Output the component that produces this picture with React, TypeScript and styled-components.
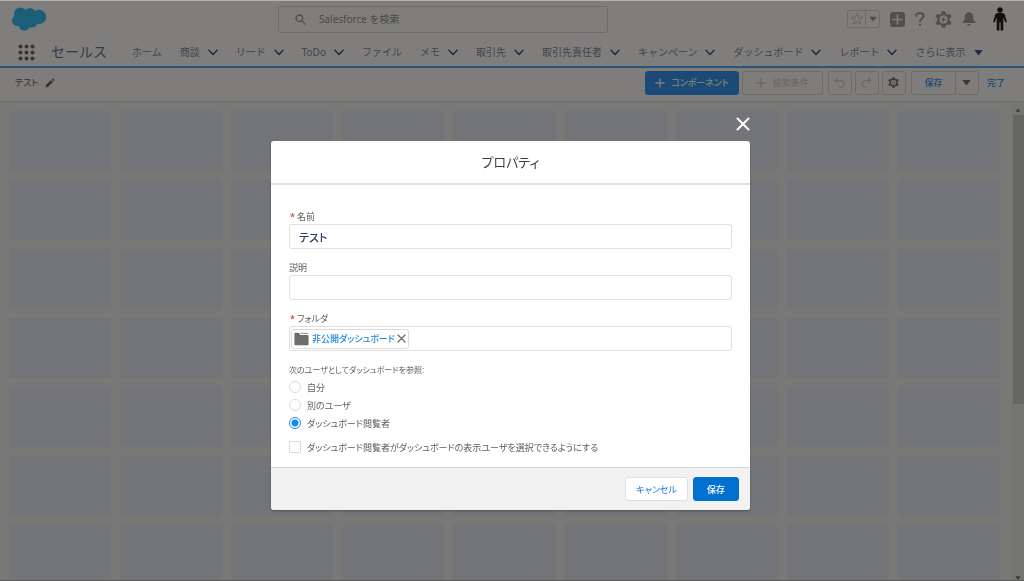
import React from 'react';
import styled, { createGlobalStyle, css } from 'styled-components';

const GlobalStyle = createGlobalStyle`
  *, *::before, *::after { box-sizing: border-box; }
  body {
    margin: 0;
    background: #f0f0ee;
    font-family: "Noto Sans", "Noto Sans CJK JP", sans-serif;
    font-size: 10px;
    line-height: 14px;
    color: #5f5d5a;
  }
  button, input { font: inherit; color: inherit; margin: 0; }
  button { cursor: pointer; }
  a { text-decoration: none; color: inherit; }
`;

/* ---------- page shell ---------- */

const Shell = styled.div`
  display: flex;
  flex-direction: column;
  height: 100vh;
  overflow: hidden;
`;

const Header = styled.header`
  flex: none;
  background: #fffcf8;
  border-bottom: 2px solid #4ea8f8;
`;

const TopRow = styled.div`
  display: grid;
  grid-template-columns: 2fr 330px 3fr;
  align-items: center;
  height: 38px;
  padding: 0 17px 0 12px;
`;

const SearchBox = styled.label`
  display: flex;
  align-items: center;
  gap: 13px;
  height: 27px;
  padding: 0 16px;
  border: 1px solid #dedbd6;
  border-radius: 3px;
  color: #a19e9a;
`;

const SearchInput = styled.input`
  flex: 1;
  min-width: 0;
  border: 0;
  padding: 0;
  outline: 0;
  background: transparent;
  &::placeholder { color: #97938e; opacity: 1; }
`;

const Utilities = styled.div`
  display: flex;
  justify-content: flex-end;
  align-items: center;
  gap: 10px;
  color: #a39c96;
`;

const Favorites = styled.div`
  display: flex;
  height: 18px;
  border: 1px solid #dad6d0;
  border-radius: 3px;
`;

const IconButton = styled.button`
  display: grid;
  place-items: center;
  padding: 0;
  border: 0;
  background: none;
`;

const FavoriteButton = styled(IconButton)`
  width: 17px;
  color: #d6d2cd;
  & + & {
    width: 14px;
    border-left: 1px solid #dad6d0;
    color: #9b9691;
  }
`;

const Avatar = styled(IconButton)`
  margin-left: 7px;
  color: #22201e;
`;

const Nav = styled.nav`
  display: flex;
  align-items: center;
  height: 28px;
  padding-left: 18px;
  color: #8288a4;
  white-space: nowrap;
`;

const AppName = styled.span`
  width: 81px;
  margin-left: 16px;
  font-size: 14px;
  line-height: 20px;
  color: #6b7498;
`;

const NavList = styled.ul`
  display: flex;
  gap: 18px;
  margin: 0;
  padding: 0;
  list-style: none;
`;

const NavItem = styled.li`
  display: flex;
  align-items: center;
  gap: 8px;
`;

const NavToggle = styled(IconButton)`
  width: 10px;
  color: #45558a;
`;

/* ---------- dashboard toolbar ---------- */

const Toolbar = styled.div`
  flex: none;
  display: flex;
  align-items: center;
  justify-content: space-between;
  height: 34px;
  padding: 0 19px 4px 15px;
  background: #fdfaf6;
  border-bottom: 1px solid #dcdad6;
`;

const DashboardName = styled.div`
  display: flex;
  align-items: center;
  gap: 7px;
  font-size: 9px;
  font-feature-settings: "palt";
  color: #64615e;
`;

const Actions = styled.div`
  display: flex;
  align-items: center;
  gap: 5px;
  font-size: 9px;
  font-feature-settings: "palt";
`;

const ButtonGroup = styled.div`
  display: flex;
  gap: 3px;
`;

const ToolButton = styled.button<{ $kind?: 'primary' | 'disabled' | 'link'; $width: number }>`
  display: flex;
  align-items: center;
  justify-content: center;
  gap: 6px;
  width: ${p => p.$width}px;
  height: 24px;
  padding: 0;
  border: 1px solid #dcd8d3;
  border-radius: 3px;
  background: transparent;
  color: #74716d;
  ${p => p.$kind === 'primary' && css`
    border-color: #3494ea;
    background: #3494ea;
    color: #fff;
    font-weight: 500;
  `}
  ${p => p.$kind === 'disabled' && css`color: #d0cdc8;`}
  ${p => p.$kind === 'link' && css`
    color: #4496e0;
    font-weight: 500;
  `}
`;

const SplitButton = styled.div`
  display: flex;
  margin-right: 3px;
  & > button:first-child { border-radius: 3px 0 0 3px; }
  & > button:last-child { border-radius: 0 3px 3px 0; border-left: 0; }
`;

const DoneLink = styled.a`
  color: #4496e0;
  font-weight: 500;
`;

/* ---------- canvas ---------- */

const Canvas = styled.main`
  flex: 1;
  min-height: 0;
  display: flex;
  overflow: hidden;
  background: #f0f0ee;
`;

const CellGrid = styled.div`
  flex: 1;
  display: grid;
  grid-template-columns: repeat(9, 1fr);
  grid-auto-rows: 60px;
  align-content: start;
  gap: 9px;
  padding: 9px 12px 0 9px;
`;

const Cell = styled.div`
  background: #e6e8f0;
`;

const ScrollTrack = styled.div`
  display: flex;
  flex-direction: column;
  align-items: center;
  width: 12px;
  padding: 5px 0 0;
  background: #efebe6;
  color: #77746f;
`;

const ScrollThumb = styled.div`
  width: 11px;
  height: 61%;
  margin: 2px 0 auto;
  background: #cfcdca;
`;

/* ---------- modal ---------- */

const Backdrop = styled.div`
  position: fixed;
  inset: 0;
  display: flex;
  flex-direction: column;
  align-items: center;
  padding: 115px 3px 0 0;
  border-top: 1px solid #b3b2ae;
  border-bottom: 1px solid #5a5a58;
  background: rgba(0, 0, 0, 0.5);
`;

const ModalFrame = styled.div`
  display: flex;
  flex-direction: column;
  width: 100%;
  max-width: 479px;
`;

const CloseButton = styled(IconButton)`
  align-self: flex-end;
  width: 14px;
  height: 15px;
  margin-bottom: 10px;
  color: #fff;
`;

const Modal = styled.section`
  overflow: hidden;
  border-radius: 3px;
  background: #fff;
  box-shadow: 0 1px 2px rgba(0, 0, 0, 0.3);
  font-size: 9px;
  line-height: 11px;
  font-feature-settings: "palt";
`;

const ModalHeader = styled.header`
  display: grid;
  place-items: center;
  height: 44px;
  border-bottom: 2px solid #e0e0e0;
`;

const ModalTitle = styled.h2`
  margin: 0;
  font-size: 13px;
  line-height: 18px;
  font-weight: 400;
  color: #3e3d3b;
`;

const ModalBody = styled.div`
  padding: 26px 18px 11px;
`;

const Field = styled.div`
  display: flex;
  flex-direction: column;
  gap: 2px;
  margin-bottom: 13px;
`;

const Required = styled.abbr`
  margin: 0 2px 0 1px;
  color: #d8504c;
  font-weight: 700;
  text-decoration: none;
`;

const fieldBox = css`
  width: 100%;
  height: 25px;
  border: 1px solid #e0dfde;
  border-radius: 3px;
  background: #fff;
`;

const TextInput = styled.input`
  ${fieldBox}
  padding: 0 9px;
  font-size: 11px;
  font-feature-settings: "palt";
  font-weight: 500;
  color: #2b3f68;
`;

const Lookup = styled.div`
  ${fieldBox}
  display: flex;
  align-items: center;
  padding: 0 1px;
`;

const Pill = styled.span`
  display: flex;
  align-items: center;
  gap: 2px;
  height: 20px;
  padding: 0 2px;
  border: 1px solid #dddbda;
  border-radius: 3px;
  color: #6f6d69;
`;

const PillLink = styled.a`
  margin-left: 1px;
  color: #2088dd;
  font-weight: 500;
`;

const LookupInput = styled.input`
  flex: 1;
  min-width: 0;
  border: 0;
  outline: 0;
  background: transparent;
`;

const RadioGroup = styled.fieldset`
  margin: 0 0 6px;
  padding: 0;
  border: 0;
`;

const Legend = styled.legend`
  padding: 0;
  margin-bottom: 3px;
  font-size: 8px;
`;

const Choice = styled.label`
  display: flex;
  align-items: center;
  gap: 6px;
  height: 18px;
`;

const Radio = styled.input`
  appearance: none;
  width: 12px;
  height: 12px;
  border: 1px solid #dcdad9;
  border-radius: 50%;
  background: #fff;
  &:checked {
    border-color: #1b8cf0;
    background: radial-gradient(circle, #1589ee 3px, #fff 4px);
  }
`;

const Checkbox = styled.input`
  appearance: none;
  width: 12px;
  height: 12px;
  border: 1px solid #dcdad9;
  border-radius: 1px;
  background: #fff;
`;

const ModalFooter = styled.footer`
  display: flex;
  justify-content: flex-end;
  gap: 5px;
  padding: 9px 11px 9px 12px;
  border-top: 1px solid #d8d7d6;
  background: #f2f2f2;
`;

const FooterButton = styled.button<{ $brand?: boolean }>`
  height: 24px;
  width: ${p => (p.$brand ? 46 : 63)}px;
  padding: 0;
  border: 1px solid ${p => (p.$brand ? '#0070d2' : '#e0dfde')};
  border-radius: 3px;
  background: ${p => (p.$brand ? '#0070d2' : '#fff')};
  color: ${p => (p.$brand ? '#fff' : '#1479d4')};
  font-weight: ${p => (p.$brand ? 500 : 400)};
  font-feature-settings: "palt";
`;

/* ---------- icons ---------- */

const Cloud = () => (
  <svg width="34" height="24" viewBox="0 0 34 24" fill="#38bcee" role="img" aria-label="Salesforce">
    <circle cx="8.5" cy="7" r="6.5" />
    <circle cx="18" cy="6.5" r="5.6" />
    <circle cx="27" cy="10" r="7.2" />
    <circle cx="5.6" cy="13.6" r="5.6" />
    <circle cx="12.3" cy="18" r="5.8" />
    <circle cx="20" cy="15" r="5.6" />
    <path d="M6 6h20v9H6z" />
  </svg>
);

const Waffle = () => (
  <svg width="17" height="17" viewBox="0 0 17 17" fill="#6e6a66">
    {[2, 8, 14].map(y => [2, 8, 14].map(x => <circle key={`${x}-${y}`} cx={x + 0.5} cy={y + 0.5} r="2" />))}
  </svg>
);

const Chevron = () => (
  <svg width="10" height="7" viewBox="0 0 10 7" fill="none" stroke="currentColor" strokeWidth="1.5" strokeLinecap="round" strokeLinejoin="round">
    <path d="M1 1.2 5 5.4 9 1.2" />
  </svg>
);

const Triangle = ({ size = 8, up = false }: { size?: number; up?: boolean }) => (
  <svg width={size} height={size} viewBox="0 0 8 8" fill="currentColor">
    <path d={up ? 'M4 2 7.5 6.4H.5z' : 'M.3 1.8h7.4L4 6.6z'} />
  </svg>
);

const Magnifier = () => (
  <svg width="11" height="11" viewBox="0 0 11 11" fill="none" stroke="currentColor" strokeWidth="1.3" strokeLinecap="round">
    <circle cx="4.3" cy="4.3" r="3.3" />
    <path d="m6.9 6.9 3.2 3.2" />
  </svg>
);

const Star = () => (
  <svg width="14" height="14" viewBox="0 0 13 13" fill="none" stroke="currentColor" strokeLinejoin="round">
    <path d="m6.5 1 1.4 3.9H12L8.8 7.3 10 11.5 6.5 9 3 11.5l1.2-4.2L1 4.9h4.1z" />
  </svg>
);

const AddSquare = () => (
  <svg width="15" height="15" viewBox="0 0 15 15">
    <rect width="15" height="15" rx="3" fill="currentColor" />
    <path d="M7.5 3v9M3 7.5h9" stroke="#fffcf8" strokeWidth="1.7" strokeLinecap="round" />
  </svg>
);

const Question = () => (
  <svg width="10" height="14" viewBox="0 0 10 14" fill="none" stroke="currentColor" strokeWidth="1.9" strokeLinecap="round">
    <path d="M1.2 4C1.2 2.2 2.8 1 4.8 1s3.8 1.2 3.8 3.1C8.6 6.6 5 6.5 5 9.2" />
    <path d="M5 12.6v.1" strokeWidth="2.2" />
  </svg>
);

const Gear = ({ size, bolt = false }: { size: number; bolt?: boolean }) => (
  <svg width={size} height={size} viewBox="0 0 16 16" fill="none" stroke="currentColor">
    <circle cx="8" cy="8" r="4.9" strokeWidth="2" />
    {[0, 60, 120, 180, 240, 300].map(a => (
      <path key={a} d="M6.2 2.8 6.8.4h2.4l.6 2.4z" fill="currentColor" strokeWidth=".6" transform={`rotate(${a} 8 8)`} />
    ))}
    {bolt ? (
      <path d="M8.9 5 6.2 8.5h1.7L7.2 11l2.7-3.5H8.2z" fill="currentColor" strokeWidth=".3" />
    ) : (
      <circle cx="8" cy="8" r="2" strokeWidth="1" />
    )}
  </svg>
);

const Bell = () => (
  <svg width="14" height="14" viewBox="0 0 14 14" fill="currentColor">
    <path d="M7 .3C4.5.3 2.9 2.2 2.9 4.5c0 3-.6 4.2-2.3 5.3-.5.4-.3 1.2.4 1.2h12c.7 0 .9-.8.4-1.2-1.7-1.1-2.3-2.3-2.3-5.3C11.1 2.2 9.5.3 7 .3zM5.2 12c.2 1 .9 1.6 1.8 1.6S8.6 13 8.8 12z" />
  </svg>
);

const Person = () => (
  <svg width="14" height="24" viewBox="0 0 14 24" fill="currentColor">
    <circle cx="7" cy="3" r="2.7" />
    <path d="M5 6h4c1.7 0 2.5.8 2.9 2.3L13.7 14c.3 1.4-1.3 1.9-1.8.7L10.3 10v12.6c0 1.5-2.7 1.5-2.7.1V15.5H6.4v7.2c0 1.4-2.7 1.4-2.7-.1V10L2.1 14.7c-.5 1.2-2.1.7-1.8-.7l1.8-5.7C2.5 6.8 3.3 6 5 6z" />
  </svg>
);

const Pencil = () => (
  <svg width="10" height="10" viewBox="0 0 10 10" fill="#6a6865">
    <path d="M.6 9.4l.6-2.6 4.9-4.9 2 2-4.9 4.9zM6.8 1.2l.7-.7c.7-.6 2.6 1.3 2 2l-.7.7z" />
  </svg>
);

const Plus = () => (
  <svg width="10" height="10" viewBox="0 0 10 10" stroke="currentColor" strokeWidth="1.3" strokeLinecap="round">
    <path d="M5 .8v8.4M.8 5h8.4" />
  </svg>
);

const Undo = ({ flip = false }: { flip?: boolean }) => (
  <svg width="11" height="11" viewBox="0 0 11 11" fill="none" stroke="currentColor" strokeWidth="1.2" strokeLinecap="round" strokeLinejoin="round">
    <g transform={flip ? 'translate(11 0) scale(-1 1)' : undefined}>
      <path d="M3.5 1 1 3.6l2.5 2.5M1.2 3.6h5.3a3.2 3.2 0 0 1 0 6.4H5" />
    </g>
  </svg>
);

const Cross = ({ size, weight }: { size: number; weight: number }) => (
  <svg width={size} height={size} viewBox="0 0 14 14" stroke="currentColor" strokeWidth={weight} strokeLinecap="round">
    <path d="m1.5 1.5 11 11M12.5 1.5l-11 11" />
  </svg>
);

const Folder = () => (
  <svg width="15" height="14" viewBox="0 0 15 14" fill="#706e6b">
    <path d="M.4 1.6C.4 1 .8.7 1.3.7h3c.5 0 .8.2 1 .6l.9 1.8h7.500c.5 0 .9.4.9.9v8.300c0 .5-.4.9-.9.9H1.300c-.5 0-.9-.4-.9-.9z" />
    <path d="M6.200.7h7.300c.6 0 .9.3.9.8v.5H6.900z" fill="#a5a3a0" />
  </svg>
);

/* ---------- data ---------- */

const navItems: { label: string; menu?: 'chevron' | 'triangle' }[] = [
  { label: 'ホーム' },
  { label: '商談', menu: 'chevron' },
  { label: 'リード', menu: 'chevron' },
  { label: 'ToDo', menu: 'chevron' },
  { label: 'ファイル' },
  { label: 'メモ', menu: 'chevron' },
  { label: '取引先', menu: 'chevron' },
  { label: '取引先責任者', menu: 'chevron' },
  { label: 'キャンペーン', menu: 'chevron' },
  { label: 'ダッシュボード', menu: 'chevron' },
  { label: 'レポート', menu: 'chevron' },
  { label: 'さらに表示', menu: 'triangle' },
];

const viewers = ['自分', '別のユーザ', 'ダッシュボード閲覧者'];

export default function App() {
  return (
    <>
      <GlobalStyle />
      <Shell>
        <Header>
          <TopRow>
            <Cloud />
            <SearchBox>
              <Magnifier />
              <SearchInput type="search" placeholder="Salesforce を検索" aria-label="Salesforce を検索" />
            </SearchBox>
            <Utilities>
              <Favorites>
                <FavoriteButton aria-label="お気に入り"><Star /></FavoriteButton>
                <FavoriteButton aria-label="お気に入りリスト"><Triangle /></FavoriteButton>
              </Favorites>
              <IconButton aria-label="追加"><AddSquare /></IconButton>
              <IconButton aria-label="ヘルプ"><Question /></IconButton>
              <IconButton aria-label="設定"><Gear size={17} bolt /></IconButton>
              <IconButton aria-label="通知"><Bell /></IconButton>
              <Avatar aria-label="プロファイル"><Person /></Avatar>
            </Utilities>
          </TopRow>
          <Nav>
            <IconButton aria-label="アプリケーションランチャー"><Waffle /></IconButton>
            <AppName>セールス</AppName>
            <NavList>
              {navItems.map(item => (
                <NavItem key={item.label}>
                  <a href="#">{item.label}</a>
                  {item.menu && (
                    <NavToggle aria-label={`${item.label} メニュー`}>
                      {item.menu === 'chevron' ? <Chevron /> : <Triangle size={9} />}
                    </NavToggle>
                  )}
                </NavItem>
              ))}
            </NavList>
          </Nav>
        </Header>

        <Toolbar>
          <DashboardName>
            テスト
            <IconButton aria-label="名前を編集"><Pencil /></IconButton>
          </DashboardName>
          <Actions>
            <ButtonGroup>
              <ToolButton $kind="primary" $width={94}><Plus />コンポーネント</ToolButton>
              <ToolButton $kind="disabled" $width={81} disabled><Plus />検索条件</ToolButton>
            </ButtonGroup>
            <ButtonGroup>
              <ToolButton $kind="disabled" $width={24} disabled aria-label="元に戻す"><Undo /></ToolButton>
              <ToolButton $kind="disabled" $width={24} disabled aria-label="やり直す"><Undo flip /></ToolButton>
              <ToolButton $width={24} aria-label="ダッシュボードのプロパティ"><Gear size={11} /></ToolButton>
            </ButtonGroup>
            <SplitButton>
              <ToolButton $kind="link" $width={45}>保存</ToolButton>
              <ToolButton $width={23} aria-label="保存メニュー"><Triangle size={9} /></ToolButton>
            </SplitButton>
            <DoneLink href="#">完了</DoneLink>
          </Actions>
        </Toolbar>

        <Canvas>
          <CellGrid>
            {Array.from({ length: 63 }, (_, i) => <Cell key={i} />)}
          </CellGrid>
          <ScrollTrack>
            <Triangle size={6} up />
            <ScrollThumb />
            <Triangle size={6} />
          </ScrollTrack>
        </Canvas>
      </Shell>

      <Backdrop>
        <ModalFrame>
          <CloseButton aria-label="閉じる"><Cross size={14} weight={2} /></CloseButton>
          <Modal role="dialog" aria-modal="true" aria-labelledby="modal-title">
            <ModalHeader>
              <ModalTitle id="modal-title">プロパティ</ModalTitle>
            </ModalHeader>
            <ModalBody>
              <Field>
                <label htmlFor="name"><Required>*</Required>名前</label>
                <TextInput id="name" defaultValue="テスト" required />
              </Field>
              <Field>
                <label htmlFor="description">説明</label>
                <TextInput id="description" />
              </Field>
              <Field>
                <label htmlFor="folder"><Required>*</Required>フォルダ</label>
                <Lookup>
                  <Pill>
                    <Folder />
                    <PillLink href="#">非公開ダッシュボード</PillLink>
                    <IconButton aria-label="削除"><Cross size={9} weight={2} /></IconButton>
                  </Pill>
                  <LookupInput id="folder" />
                </Lookup>
              </Field>
              <RadioGroup>
                <Legend>次のユーザとしてダッシュボードを参照:</Legend>
                {viewers.map((viewer, i) => (
                  <Choice key={viewer}>
                    <Radio type="radio" name="viewer" defaultChecked={i === 2} />
                    {viewer}
                  </Choice>
                ))}
              </RadioGroup>
              <Choice>
                <Checkbox type="checkbox" />
                ダッシュボード閲覧者がダッシュボードの表示ユーザを選択できるようにする
              </Choice>
            </ModalBody>
            <ModalFooter>
              <FooterButton>キャンセル</FooterButton>
              <FooterButton $brand>保存</FooterButton>
            </ModalFooter>
          </Modal>
        </ModalFrame>
      </Backdrop>
    </>
  );
}
